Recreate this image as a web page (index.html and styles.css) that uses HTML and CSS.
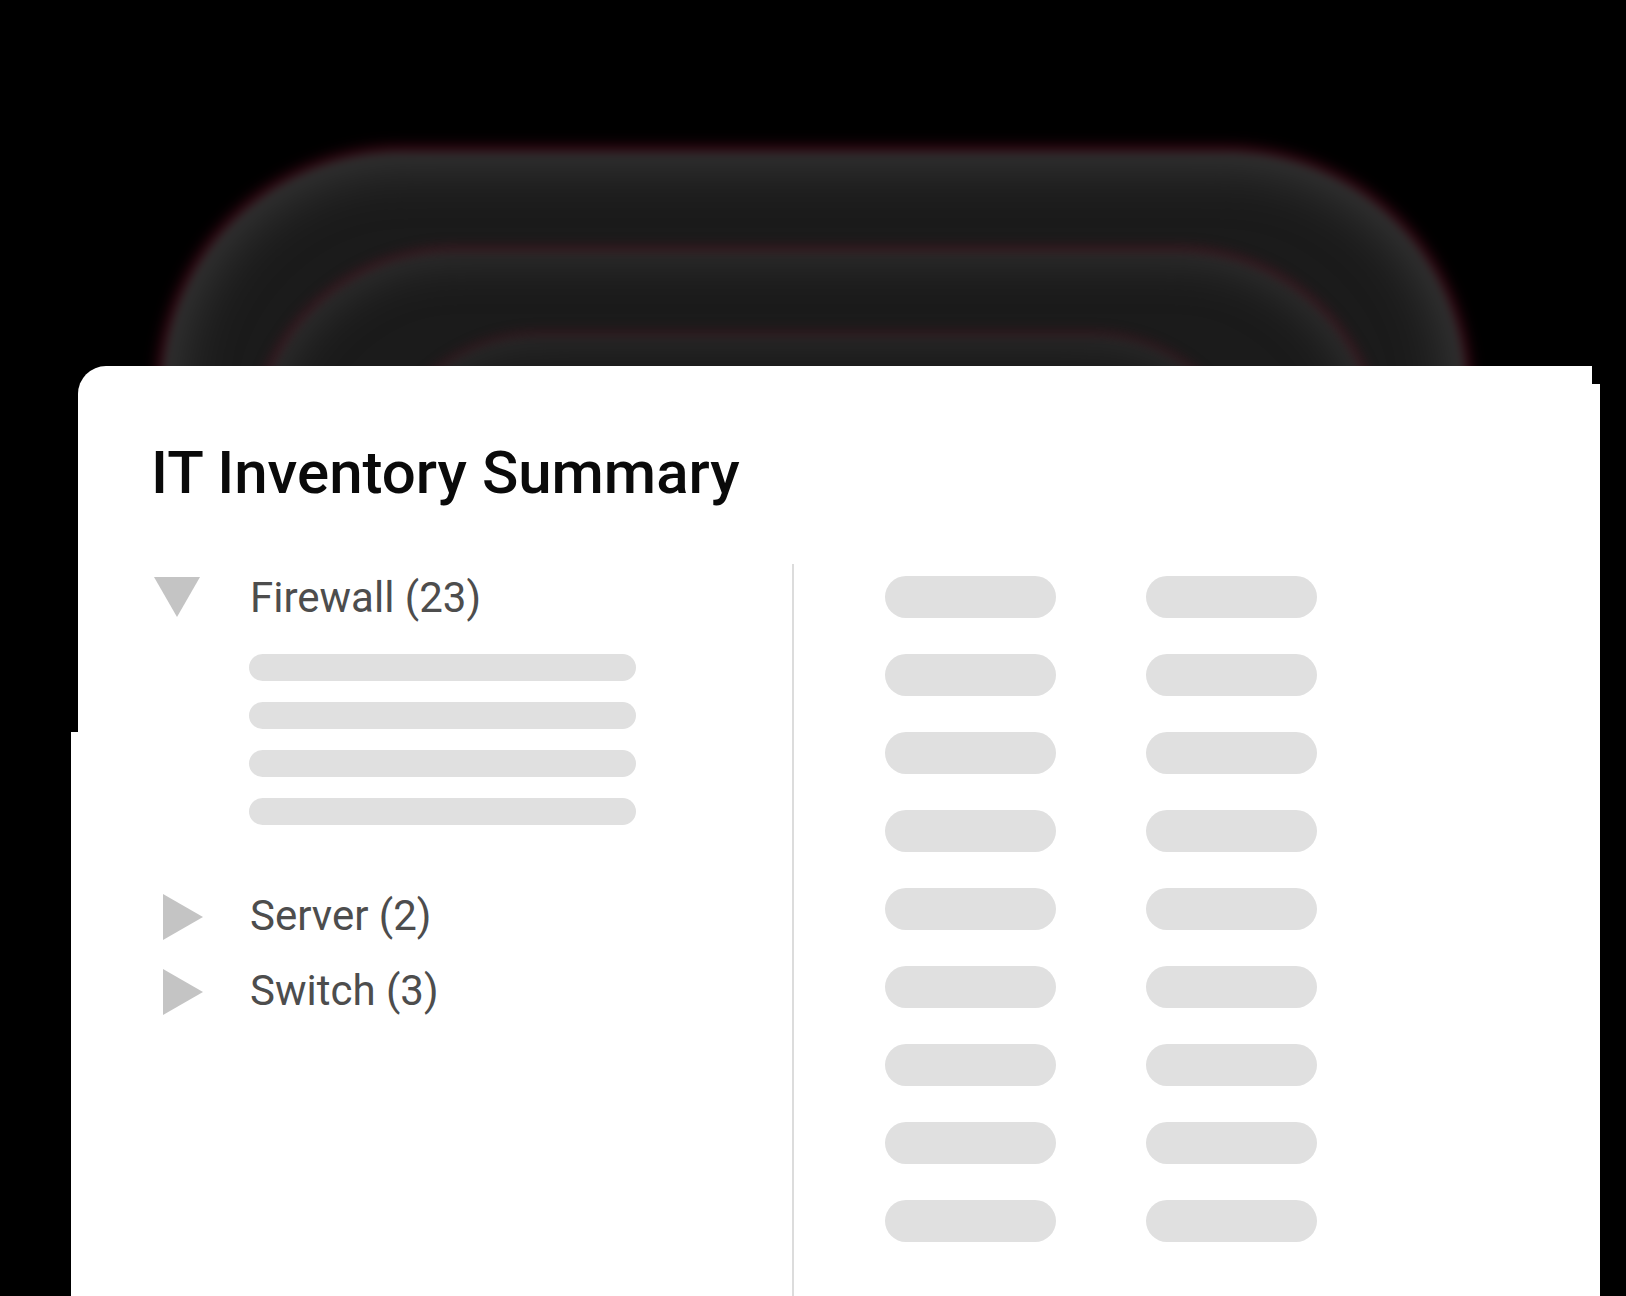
FILE: index.html
```html
<!DOCTYPE html>
<html lang="en">
<head>
<meta charset="utf-8">
<title>IT Inventory Summary</title>
<link rel="stylesheet" href="styles.css">
</head>
<body>
<div class="stage">
  <div class="glow glow-1"></div>
  <div class="glow glow-2"></div>
  <div class="glow glow-3"></div>
  <section class="card">
    <h1 class="title">IT Inventory Summary</h1>
    <div class="content">
      <div class="tree">
        <div class="node">
          <svg class="caret" width="50" height="48" viewBox="0 0 50 48"><polygon points="0,3 46,3 23,43"/></svg>
          <span class="label">Firewall (23)</span>
        </div>
        <div class="bars">
          <div class="bar"></div>
          <div class="bar"></div>
          <div class="bar"></div>
          <div class="bar"></div>
        </div>
        <div class="node">
          <svg class="caret" width="50" height="48" viewBox="0 0 50 48"><polygon points="9,2 49,25 9,48"/></svg>
          <span class="label">Server (2)</span>
        </div>
        <div class="node">
          <svg class="caret" width="50" height="48" viewBox="0 0 50 48"><polygon points="9,2 49,25 9,48"/></svg>
          <span class="label">Switch (3)</span>
        </div>
      </div>
      <div class="divider"></div>
      <div class="pills">
        <div class="pill"></div><div class="pill"></div>
        <div class="pill"></div><div class="pill"></div>
        <div class="pill"></div><div class="pill"></div>
        <div class="pill"></div><div class="pill"></div>
        <div class="pill"></div><div class="pill"></div>
        <div class="pill"></div><div class="pill"></div>
        <div class="pill"></div><div class="pill"></div>
        <div class="pill"></div><div class="pill"></div>
        <div class="pill"></div><div class="pill"></div>
      </div>
    </div>
  </section>
</div>
</body>
</html>
```

FILE: styles.css
```css
html, body {
  margin: 0;
  background: #000;
}

body {
  width: 1626px;
  height: 1296px;
  overflow: hidden;
  font-family: Roboto, "Noto Sans", sans-serif;
}

.stage {
  position: relative;
  width: 1626px;
  height: 1296px;
  padding-top: 366px;
  box-sizing: border-box;
  overflow: hidden;
}

/* blurred stacked backdrop */
.glow {
  position: absolute;
  background: #1b1b1b;
  filter: blur(5px);
}

.glow-1 {
  left: 162px;
  top: 152px;
  width: 1304px;
  height: 520px;
  border-radius: 240px;
  box-shadow: inset 0 0 50px 16px #363636, 0 0 12px 5px rgba(120, 20, 45, 0.6);
  z-index: 0;
}

.glow-2 {
  left: 254px;
  top: 252px;
  width: 1124px;
  height: 420px;
  border-radius: 200px;
  box-shadow: inset 0 0 42px 12px #303030, 0 0 10px 4px rgba(110, 18, 40, 0.55);
  z-index: 1;
}

.glow-3 {
  left: 378px;
  top: 336px;
  width: 874px;
  height: 320px;
  border-radius: 160px;
  box-shadow: inset 0 0 36px 10px #2c2c2c, 0 0 8px 3px rgba(100, 16, 36, 0.55);
  z-index: 1;
}

/* card */
.card {
  position: relative;
  z-index: 2;
  display: flex;
  flex-direction: column;
  margin-left: 78px;
  width: 1514px;
  height: 930px;
  background: #fff;
  border-radius: 28px 0 0 0;
  padding: 72px 0 0 73px;
  box-sizing: border-box;
}

.card::after {
  content: "";
  position: absolute;
  right: -8px;
  top: 18px;
  bottom: 0;
  width: 8px;
  background: #fff;
}

.card::before {
  content: "";
  position: absolute;
  left: -7px;
  top: 366px;
  bottom: 0;
  width: 8px;
  background: #fff;
}

.title {
  margin: 0;
  font-size: 60px;
  font-weight: 500;
  line-height: 70px;
  color: #0a0a0a;
}

.content {
  flex: 1;
  display: grid;
  grid-template-columns: 641px 2px 1fr;
  margin-top: 56px;
}

/* tree */
.tree {
  display: flex;
  flex-direction: column;
  padding: 10px 0 0 3px;
}

.node {
  display: flex;
  align-items: center;
  height: 48px;
}

.node + .node {
  margin-top: 27px;
}

.bars + .node {
  margin-top: 67px;
}

.caret {
  flex: none;
  overflow: visible;
  fill: #c4c4c4;
}

.label {
  margin-left: 46px;
  font-size: 42px;
  line-height: 48px;
  color: #4d4d4d;
}

.bars {
  display: flex;
  flex-direction: column;
  gap: 21px;
  margin: 32px 0 0 95px;
}

.bar {
  width: 387px;
  height: 27px;
  border-radius: 14px;
  background: #e0e0e0;
}

.divider {
  background: #dcdcdc;
}

/* right column */
.pills {
  display: grid;
  grid-template-columns: 171px 171px;
  column-gap: 90px;
  row-gap: 36px;
  align-content: start;
  padding: 12px 0 0 91px;
}

.pill {
  height: 42px;
  border-radius: 21px;
  background: #e0e0e0;
}
```
